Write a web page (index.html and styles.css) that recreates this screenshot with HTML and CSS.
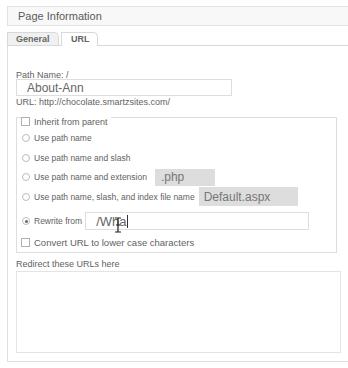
FILE: index.html
```html
<!DOCTYPE html>
<html lang="en">
<head>
  <meta charset="UTF-8" />
  <title>Page Information</title>
  <link rel="stylesheet" href="styles.css">
</head>
<body>
  <div class="page-info">
    <div class="title-bar">Page Information</div>

    <div class="tabs">
      <div class="tab">General</div>
      <div class="tab active">URL</div>
    </div>

    <div class="panel">
      <div class="label">Path Name: /</div>
      <div class="text-box path-box">About-Ann</div>
      <div class="url-line">URL: http://chocolate.smartzsites.com/</div>

      <div class="group">
        <div class="legend"><span class="check"></span>Inherit from parent</div>

        <div class="row row-a"><span class="radio"></span>Use path name</div>
        <div class="row row-b"><span class="radio"></span>Use path name and slash</div>
        <div class="row row-a">
          <span class="radio"></span>Use path name and extension
          <span class="grey-box ext-box">.php</span>
        </div>
        <div class="row row-b">
          <span class="radio"></span>Use path name, slash, and index file name
          <span class="grey-box index-box">Default.aspx</span>
        </div>
        <div class="row row-rewrite">
          <span class="radio checked"></span>Rewrite from
          <span class="text-box rewrite-box">/Wha<span class="caret"></span>
            <!-- mouse I-beam over the field -->
            <svg class="ibeam" width="8" height="16" viewBox="0 0 8 16">
              <path d="M1 1h6M4 1v14M1 15h6M2 8h4" stroke="#222" stroke-width="1.2" fill="none"/>
            </svg>
          </span>
        </div>
        <div class="row row-last"><span class="check"></span>Convert URL to lower case characters</div>
      </div>

      <div class="label redirect-label">Redirect these URLs here</div>
      <div class="redirect-box"></div>
    </div>
  </div>
</body>
</html>
```

FILE: styles.css
```css
body {
  margin: 0;
  padding: 0;
  background: #fff;
  font-family: 'Liberation Sans', Arial, sans-serif;
  color: #626262;
}

.page-info {
  padding: 6px 0 0 7px;
}

.title-bar {
  height: 18px;
  line-height: 18px;
  border: 1px solid #e2e2e2;
  border-right: none;
  background: #f8f8f8;
  padding-left: 10px;
  font-size: 11px;
  color: #5a5a5a;
}

.tabs {
  display: flex;
  gap: 2px;
  margin-top: 6px;
  height: 13px;
  border-bottom: 1px solid #d8d8d8;
}

.tab {
  height: 12px;
  line-height: 13px;
  padding: 0 8px 0 8px;
  border: 1px solid #d8d8d8;
  border-bottom: none;
  border-radius: 0 5px 0 0;
  background: #f0f0f0;
  font-size: 9px;
  font-weight: bold;
  color: #666;
  width: 34px;
}

.tab.active {
  background: #fff;
  width: 18px;
  padding: 0 8px 0 9px;
  height: 13px;
  margin-bottom: -1px;
}

.panel {
  border-left: 1px solid #e0e0e0;
  border-bottom: 1px solid #e0e0e0;
  padding: 25px 0 8px 8px;
  font-size: 8.5px;
}

.label {
  height: 8px;
  line-height: 8px;
  font-size: 9px;
}

.text-box {
  display: flex;
  align-items: center;
  border: 1px solid #dedede;
  background: #fff;
  padding-left: 10px;
  font-size: 12px;
  color: #666;
}

.path-box {
  width: 204px;
  height: 15px;
}

.url-line {
  margin-top: 1px;
  height: 10px;
  line-height: 10px;
  font-size: 9px;
}

.group {
  margin-top: 10px;
  border: 1px solid #dedede;
  padding: 0 0 3px 4px;
  box-sizing: border-box;
  width: 321px;
}

.legend {
  display: inline-flex;
  align-items: center;
  margin: -7px 0 0 0;
  height: 12px;
  background: #fff;
  padding-right: 3px;
  font-size: 9px;
}

.row {
  display: flex;
  align-items: center;
  white-space: nowrap;
}

.row-a {
  height: 20px;
}

.row-b {
  height: 19px;
}

.row-rewrite {
  height: 28px;
  margin-top: 1px;
}

.row-last {
  height: 14px;
  font-size: 9.5px;
}

.check {
  width: 7px;
  height: 7px;
  border: 1px solid #b0b0b0;
  margin-right: 4px;
  background: #fff;
}

.radio {
  width: 6px;
  height: 6px;
  border: 1px solid #bcbcbc;
  border-radius: 50%;
  margin: 0 4px 0 1px;
  position: relative;
}

.radio.checked::after {
  content: "";
  position: absolute;
  left: 1.5px;
  top: 1.5px;
  width: 3px;
  height: 3px;
  border-radius: 50%;
  background: #666;
}

.grey-box {
  display: flex;
  align-items: center;
  background: #dddddd;
  color: #777;
  font-size: 12px;
}

.ext-box {
  margin-left: 8px;
  width: 54px;
  height: 17px;
  padding-left: 6px;
}

.index-box {
  margin-left: 4px;
  width: 94px;
  height: 19px;
  padding-left: 5px;
}

.rewrite-box {
  position: relative;
  margin-left: 3px;
  width: 212px;
  height: 16px;
  font-size: 13px;
}

.caret {
  display: inline-block;
  width: 1px;
  height: 13px;
  background: #333;
}

.ibeam {
  position: absolute;
  left: 28px;
  top: 4px;
}

.redirect-label {
  margin-top: 6px;
  height: 10px;
  line-height: 10px;
}

.redirect-box {
  margin-top: 2px;
  width: 323px;
  height: 80px;
  border: 1px solid #e4e4e4;
}
```
